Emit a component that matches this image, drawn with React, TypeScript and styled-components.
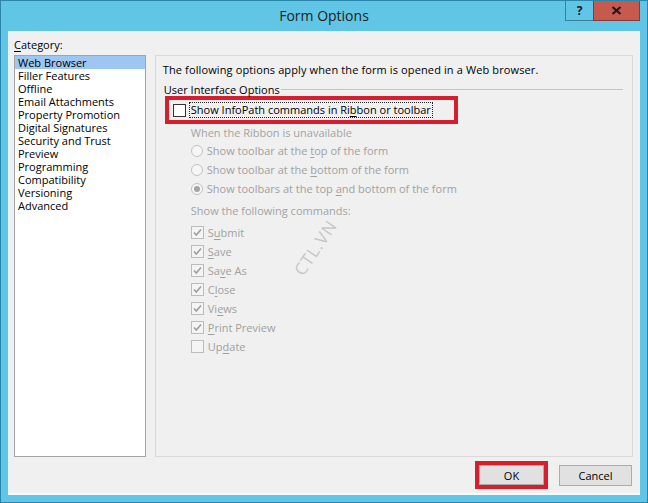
import React from 'react';
import styled, { createGlobalStyle } from 'styled-components';

const GlobalStyle = createGlobalStyle`
  html, body {
    margin: 0;
    padding: 0;
    background: #61c5e6;
  }
  body {
    font-family: "Open Sans", "Liberation Sans", sans-serif;
    font-size: 11px;
    color: #000;
  }
`;

const Window = styled.div`
  width: 648px;
  height: 503px;
  box-sizing: border-box;
  border: 1px solid #2b86ab;
  background: #61c5e6;
  display: flex;
  flex-direction: column;
  padding: 0 7px 7px 7px;
`;

const TitleBar = styled.div`
  height: 30px;
  display: grid;
  grid-template-columns: 1fr auto 1fr;
  margin: 0 -7px;
`;

const Title = styled.div`
  grid-column: 2;
  font-size: 14px;
  line-height: 30px;
  color: #1d1d1d;
`;

const Controls = styled.div`
  grid-column: 3;
  display: flex;
  justify-content: flex-end;
  align-items: flex-start;
  padding-right: 7px;
`;

const HelpButton = styled.div`
  width: 27px;
  height: 19px;
  border: 1px solid #3f7f98;
  border-top: none;
  border-right: none;
  background: #61c5e6;
  display: flex;
  align-items: center;
  justify-content: center;
  font-weight: 700;
  font-size: 12px;
  color: #1a1a1a;
`;

const CloseButton = styled.div`
  width: 45px;
  height: 19px;
  border: 1px solid #8a3a36;
  border-top: none;
  background: #c75a4f;
  display: flex;
  align-items: center;
  justify-content: center;
`;

const Body = styled.div`
  flex: 1;
  background: #f0f0f0;
  border: 1px solid #e9f3f7;
  border-bottom: 2px solid #f7fafb;
  display: flex;
  flex-direction: column;
  padding: 5px 6px 0 5px;
`;

const FieldLabel = styled.div`
  height: 18px;
  line-height: 16px;
`;

const Main = styled.div`
  height: 402px;
  display: flex;
`;

const ListBox = styled.div`
  width: 132px;
  box-sizing: border-box;
  border: 1px solid #a4a4a4;
  background: #fff;
  display: flex;
  flex-direction: column;
`;

const ListItem = styled.div<{ $selected?: boolean }>`
  height: 13px;
  line-height: 13px;
  padding-left: 3px;
  background: ${(p) => (p.$selected ? '#9dc6f2' : 'transparent')};
  white-space: nowrap;
`;

const Panel = styled.div`
  position: relative;
  margin-left: 9px;
  width: 479px;
  box-sizing: border-box;
  border: 1px solid #d9d9d9;
  padding: 6px 9px 0 7px;
  overflow: hidden;
`;

const Intro = styled.div`
  height: 15px;
  line-height: 15px;
  letter-spacing: 0.12px;
  white-space: nowrap;
`;

const GroupHeader = styled.div`
  margin-top: 5px;
  height: 14px;
  display: flex;
  align-items: center;
  padding-left: 1px;
  white-space: nowrap;
  &::after {
    content: '';
    flex: 1;
    height: 1px;
    background: #c4c4c4;
    margin-left: 1px;
  }
`;

const Highlight = styled.div<{ $width: number }>`
  width: ${(p) => p.$width}px;
  height: 28px;
  box-sizing: border-box;
  border: 4px solid #d51f2e;
  display: flex;
  align-items: center;
  padding-left: 4px;
  margin-left: 2px;
`;

const FocusText = styled.span`
  outline: 1px dotted #222;
  outline-offset: 0;
  padding: 0 1px;
  line-height: 14px;
  white-space: nowrap;
`;

const Indent = styled.div`
  padding-left: 28px;
`;

const Caption = styled.div<{ $gap?: number }>`
  margin-top: ${(p) => p.$gap ?? 0}px;
  height: 16px;
  line-height: 16px;
  color: #a3a3a3;
  white-space: nowrap;
`;

const CommandList = styled.div`
  margin-top: 4px;
`;

const OptionRow = styled.div<{ $disabled?: boolean }>`
  height: 19px;
  display: flex;
  align-items: center;
  gap: 4px;
  color: ${(p) => (p.$disabled ? '#a0a0a0' : '#000')};
  white-space: nowrap;
`;

const Box = styled.span<{ $disabled?: boolean }>`
  width: 13px;
  height: 13px;
  box-sizing: border-box;
  border: 1px solid ${(p) => (p.$disabled ? '#bcbcbc' : '#333')};
  background: ${(p) => (p.$disabled ? '#f4f4f4' : '#fff')};
  display: inline-flex;
  align-items: center;
  justify-content: center;
  flex-shrink: 0;
`;

const Radio = styled.span<{ $checked?: boolean }>`
  width: 12px;
  height: 12px;
  box-sizing: border-box;
  border-radius: 50%;
  border: 1px solid #c2c2c2;
  background: #f6f6f6;
  display: inline-flex;
  align-items: center;
  justify-content: center;
  flex-shrink: 0;
  &::after {
    content: '';
    width: 6px;
    height: 6px;
    border-radius: 50%;
    background: ${(p) => (p.$checked ? '#a3a3a3' : 'transparent')};
  }
`;

const Key = styled.u`
  text-decoration-thickness: 1px;
  text-underline-offset: 2px;
`;

const Watermark = styled.div`
  position: absolute;
  left: 128px;
  top: 180px;
  transform: rotate(-56deg);
  font-size: 17px;
  letter-spacing: 1px;
  color: rgba(130, 130, 130, 0.4);
  pointer-events: none;
`;

const ButtonRow = styled.div`
  display: flex;
  justify-content: flex-end;
  align-items: center;
  gap: 11px;
  padding-top: 4px;
  padding-right: 1px;
`;

const RedFrame = styled.div`
  border: 4px solid #d51f2e;
  display: flex;
`;

const Button = styled.button<{ $w: number; $h: number }>`
  width: ${(p) => p.$w}px;
  height: ${(p) => p.$h}px;
  box-sizing: border-box;
  border: 1px solid #acacac;
  background: #e1e1e1;
  font-family: inherit;
  font-size: 11px;
  color: #000;
  padding: 0;
`;

const Check = ({ on }: { on: boolean }) =>
  on ? (
    <svg width="11" height="11" viewBox="0 0 11 11">
      <path d="M2 5.5 L4.3 8 L9 2.5" fill="none" stroke="#9e9e9e" strokeWidth="1.6" />
    </svg>
  ) : null;

const categories = [
  'Web Browser',
  'Filler Features',
  'Offline',
  'Email Attachments',
  'Property Promotion',
  'Digital Signatures',
  'Security and Trust',
  'Preview',
  'Programming',
  'Compatibility',
  'Versioning',
  'Advanced',
];

const commands: { pre: string; key: string; post: string; on: boolean }[] = [
  { pre: 'S', key: 'u', post: 'bmit', on: true },
  { pre: '', key: 'S', post: 'ave', on: true },
  { pre: 'Sa', key: 'v', post: 'e As', on: true },
  { pre: 'C', key: 'l', post: 'ose', on: true },
  { pre: 'Vi', key: 'e', post: 'ws', on: true },
  { pre: '', key: 'P', post: 'rint Preview', on: true },
  { pre: 'Up', key: 'd', post: 'ate', on: false },
];

const App: React.FC = () => {
  return (
    <>
      <GlobalStyle />
      <Window>
        <TitleBar>
          <Title>Form Options</Title>
          <Controls>
            <HelpButton>?</HelpButton>
            <CloseButton>
              <svg width="11" height="9" viewBox="0 0 11 9">
                <path d="M1.5 1 L9.5 8 M9.5 1 L1.5 8" stroke="#1b1b1b" strokeWidth="2.2" />
              </svg>
            </CloseButton>
          </Controls>
        </TitleBar>

        <Body>
          <FieldLabel>
            <Key>C</Key>ategory:
          </FieldLabel>
          <Main>
            <ListBox>
              {categories.map((c, i) => (
                <ListItem key={c} $selected={i === 0}>
                  {c}
                </ListItem>
              ))}
            </ListBox>

            <Panel>
              <Intro>The following options apply when the form is opened in a Web browser.</Intro>
              <GroupHeader>User Interface Options</GroupHeader>
              <Highlight $width={293}>
                <OptionRow>
                  <Box />
                  <FocusText>
                    Show InfoPath commands in Ri<Key>b</Key>bon or toolbar
                  </FocusText>
                </OptionRow>
              </Highlight>

              <Indent>
                <Caption $gap={1}>When the Ribbon is unavailable</Caption>
                <OptionRow $disabled>
                  <Radio />
                  <span>
                    Show toolbar at the <Key>t</Key>op of the form
                  </span>
                </OptionRow>
                <OptionRow $disabled>
                  <Radio />
                  <span>
                    Show toolbar at the <Key>b</Key>ottom of the form
                  </span>
                </OptionRow>
                <OptionRow $disabled>
                  <Radio $checked />
                  <span>
                    Show toolbars at the top <Key>a</Key>nd bottom of the form
                  </span>
                </OptionRow>

                <Caption $gap={5}>Show the following commands:</Caption>
                <CommandList>
                  {commands.map((c) => (
                    <OptionRow $disabled key={c.pre + c.key + c.post}>
                      <Box $disabled>
                        <Check on={c.on} />
                      </Box>
                      <span>
                        {c.pre}
                        <Key>{c.key}</Key>
                        {c.post}
                      </span>
                    </OptionRow>
                  ))}
                </CommandList>
              </Indent>

              <Watermark>CTL.VN</Watermark>
            </Panel>
          </Main>

          <ButtonRow>
            <RedFrame>
              <Button $w={65} $h={20}>OK</Button>
            </RedFrame>
            <Button $w={73} $h={21}>Cancel</Button>
          </ButtonRow>
        </Body>
      </Window>
    </>
  );
};

export default App;
